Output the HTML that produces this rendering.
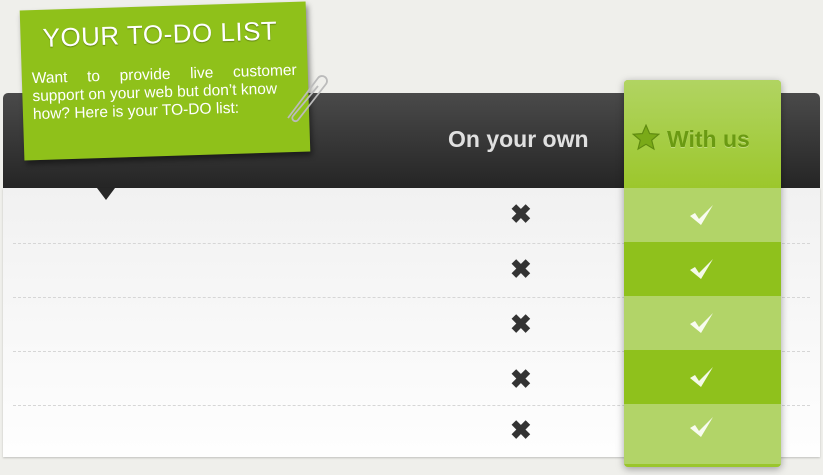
<!DOCTYPE html>
<html><head><style>
body{margin:0;width:823px;height:475px;background:#efefeb;position:relative;overflow:hidden;font-family:"Liberation Sans",sans-serif}
.head{position:absolute;left:3px;top:93px;width:817px;height:95px;background:linear-gradient(#4a4a4a,#252525);border-radius:5px 5px 0 0}
.body{position:absolute;left:3px;top:188px;width:817px;height:269px;background:linear-gradient(#f1f1f1,#fefefe);box-shadow:0 1px 2px rgba(0,0,0,.2)}
.sep{position:absolute;left:13px;width:797px;border-top:1px dashed #d6d6d6}
.tri{position:absolute;left:97px;top:188px;width:0;height:0;border-left:9px solid transparent;border-right:9px solid transparent;border-top:12px solid #262626}
.own{position:absolute;left:448px;top:126px;color:#e0e0e0;font-weight:bold;font-size:23px}
.x{position:absolute;left:510px;font-size:26px;font-weight:bold;color:#333;line-height:1}
.col{position:absolute;left:624px;top:80px;width:157px;height:387px;border-radius:4px;background:#9ac62c;box-shadow:0 2px 8px rgba(0,0,0,.35);overflow:hidden}
.col .top{height:108px;background:linear-gradient(#b1d462,#9cc72c)}
.r{height:54px;position:relative}
.l{background:#b2d468}.d{background:#8fc11c}
.chk{position:absolute;left:64px;top:14px}
.note{position:absolute;left:22px;top:6px;width:286px;height:150px;background:#8fc11a;transform:rotate(-1.8deg);box-shadow:2px 4px 6px rgba(0,0,0,.45);color:#fff}
.note h1{margin:0;position:absolute;left:22px;top:13px;font-size:26px;font-weight:normal;letter-spacing:.5px;font-family:"Liberation Sans",sans-serif;text-shadow:0 1px 1px rgba(0,0,0,.3)}
.note p{margin:0;position:absolute;left:10px;top:60px;width:265px;font-size:15.5px;line-height:18px;white-space:nowrap}
.j{display:flex;justify-content:space-between}
</style></head><body>
<div class="head"></div>
<div class="body"></div>
<div class="tri"></div>
<div class="sep" style="top:243px"></div><div class="sep" style="top:297px"></div><div class="sep" style="top:351px"></div><div class="sep" style="top:405px"></div>
<div class="own">On your own</div>
<div class="x" style="top:201px">✖</div><div class="x" style="top:256px">✖</div><div class="x" style="top:311px">✖</div><div class="x" style="top:366px">✖</div><div class="x" style="top:417px">✖</div>
<div class="col">
<div class="top" style="position:relative"><svg style="position:absolute;left:8px;top:44px" width="28" height="28" viewBox="0 0 24 24"><path d="M12 1l3.1 7.2 7.8.6-6 5.1 1.9 7.6L12 17.4 5.2 21.5l1.9-7.6-6-5.1 7.8-.6z" fill="#7aaa18" stroke="#5f8a10" stroke-width="1"/></svg><div style="position:absolute;left:43px;top:46px;font-weight:bold;font-size:23px;color:#6a9a12;text-shadow:0 1px 0 rgba(255,255,255,.3)">With us</div></div>
<div class="r l"><svg class="chk" width="28" height="24" viewBox="0 0 28 24"><path d="M2 14l5-3 4 6 14-14-12 20z" fill="#fff" opacity=".9"/></svg></div>
<div class="r d"><svg class="chk" width="28" height="24" viewBox="0 0 28 24"><path d="M2 14l5-3 4 6 14-14-12 20z" fill="#fff" opacity=".9"/></svg></div>
<div class="r l"><svg class="chk" width="28" height="24" viewBox="0 0 28 24"><path d="M2 14l5-3 4 6 14-14-12 20z" fill="#fff" opacity=".9"/></svg></div>
<div class="r d"><svg class="chk" width="28" height="24" viewBox="0 0 28 24"><path d="M2 14l5-3 4 6 14-14-12 20z" fill="#fff" opacity=".9"/></svg></div>
<div class="r l" style="height:60px"><svg class="chk" width="28" height="24" viewBox="0 0 28 24" style="top:10px"><path d="M2 14l5-3 4 6 14-14-12 20z" fill="#fff" opacity=".9"/></svg></div>
</div>
<div class="note"><h1>YOUR TO-DO LIST</h1><p><span class="j"><span>Want</span><span>to</span><span>provide</span><span>live</span><span>customer</span></span>support on your web but don’t know<br>how? Here is your TO-DO list:</p></div>
<svg style="position:absolute;left:282px;top:70px" width="48" height="54" viewBox="0 0 48 54"><path d="M6 48 L36 8 a5 5 0 0 1 8 6 L16 50 a3 3 0 0 1 -5 -4 L36 16" fill="none" stroke="#bbb" stroke-width="1.8"/></svg>
</body></html>
